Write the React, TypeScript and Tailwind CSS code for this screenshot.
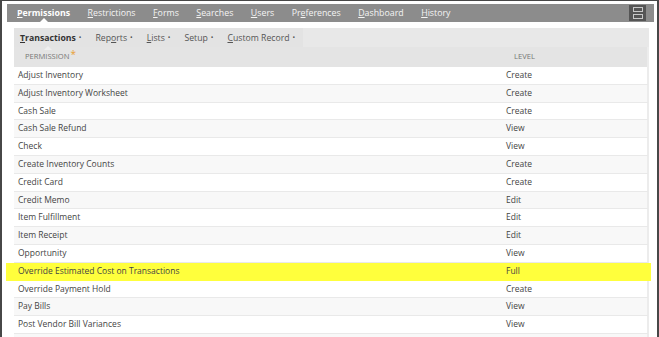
import React from 'react';

type Row = { name: string; level: string; highlight?: boolean };

const rows: Row[] = [
  { name: 'Adjust Inventory', level: 'Create' },
  { name: 'Adjust Inventory Worksheet', level: 'Create' },
  { name: 'Cash Sale', level: 'Create' },
  { name: 'Cash Sale Refund', level: 'View' },
  { name: 'Check', level: 'View' },
  { name: 'Create Inventory Counts', level: 'Create' },
  { name: 'Credit Card', level: 'Create' },
  { name: 'Credit Memo', level: 'Edit' },
  { name: 'Item Fulfillment', level: 'Edit' },
  { name: 'Item Receipt', level: 'Edit' },
  { name: 'Opportunity', level: 'View' },
  { name: 'Override Estimated Cost on Transactions', level: 'Full', highlight: true },
  { name: 'Override Payment Hold', level: 'Create' },
  { name: 'Pay Bills', level: 'View' },
  { name: 'Post Vendor Bill Variances', level: 'View' },
  { name: '', level: '' },
];

// label with one underlined access-key letter
function Key({ text, at }: { text: string; at: number }) {
  return (
    <>
      {text.slice(0, at)}
      <span className="underline underline-offset-1">{text[at]}</span>
      {text.slice(at + 1)}
    </>
  );
}

const mainTabs: [string, number][] = [
  ['Restrictions', 0],
  ['Forms', 0],
  ['Searches', 0],
  ['Users', 0],
  ['Preferences', 2],
  ['Dashboard', 0],
  ['History', 0],
];

const subTabs: [string, number][] = [
  ['Reports', 3],
  ['Lists', 0],
  ['Setup', -1],
  ['Custom Record', 0],
];

export default function App() {
  return (
    <div className="w-[659px] h-[337px] overflow-hidden bg-white border-t border-l-2 border-r-2 border-[#474747] font-['Open_Sans',sans-serif]">
      {/* Main tab bar */}
      <div className="mt-[3px] ml-[5px] mr-[3px] h-[18px] pt-[2px] bg-[#8c8c8c] flex items-center text-[8.8px] text-white">
        <div className="relative ml-[10px] font-bold">
          <Key text="Permissions" at={0} />
          <span className="absolute left-1/2 -translate-x-1/2 top-[11px] w-0 h-0 border-l-[4px] border-r-[4px] border-b-[4px] border-l-transparent border-r-transparent border-b-white" />
        </div>
        {mainTabs.map(([t, k]) => (
          <div key={t} className="ml-[17.5px] text-[#f4f4f4]">
            <Key text={t} at={k} />
          </div>
        ))}
        <div className="ml-auto mr-[8px] -mt-[2px] w-[17px] h-[16px] bg-[#555] flex flex-col items-center justify-center gap-[2px]">
          <div className="w-[10px] h-[5px] border border-[#c8c8c8]" />
          <div className="w-[10px] h-[5px] border border-[#c8c8c8]" />
        </div>
      </div>

      {/* Sub tabs */}
      <div className="mt-[6px] ml-[12px] w-[635px] h-[19px] bg-[#e8e8e8] flex items-center text-[8.7px] text-[#555]">
        <div className="h-full pt-[2px] flex items-center bg-[#e3e3e3] pr-[8px]">
          <div className="relative ml-[6px] font-bold text-[#333]">
            <Key text="Transactions" at={0} />
            <span className="absolute left-1/2 -translate-x-1/2 top-[14px] w-0 h-0 border-l-[4px] border-r-[4px] border-b-[4px] border-l-transparent border-r-transparent border-b-[#efefef]" />
          </div>
          <span className="ml-[3px] text-[7px]">•</span>
          {subTabs.map(([t, k]) => (
            <div key={t} className="ml-[14px] flex items-center">
              {k >= 0 ? <Key text={t} at={k} /> : t}
              <span className="ml-[3px] text-[7px]">•</span>
            </div>
          ))}
        </div>
      </div>

      {/* Header */}
      <div className="ml-[12px] w-[635px] h-[20px] bg-[#e4e4e4] border-r-2 border-[#ececec] flex items-center text-[7.6px] text-[#777] uppercase">
        <div className="pl-[11px] w-[499px] flex items-start">
          Permission<span className="text-[#e9a035] text-[10px] leading-[7px] ml-[1px]">*</span>
        </div>
        <div className="pl-[1px]">Level</div>
      </div>

      {/* Rows */}
      {rows.map((r, i) =>
        r.highlight ? (
          <div
            key={r.name}
            className="ml-[4px] w-[645px] h-[17.8px] bg-[#ffff3c] flex items-center text-[8.5px] text-[#444]"
          >
            <div className="pl-[12px] w-[500px]">{r.name}</div>
            <div>{r.level}</div>
          </div>
        ) : (
          <div
            key={r.name || i}
            className={`ml-[12px] w-[635px] h-[17.8px] border-b border-r-2 border-b-[#e9e9e9] border-r-[#ececec] flex items-center text-[8.5px] text-[#444] ${
              i % 2 === 0 ? 'bg-white' : 'bg-[#f8f8f8]'
            }`}
          >
            <div className="pl-[4px] w-[492px]">{r.name}</div>
            <div>{r.level}</div>
          </div>
        )
      )}
    </div>
  );
}
